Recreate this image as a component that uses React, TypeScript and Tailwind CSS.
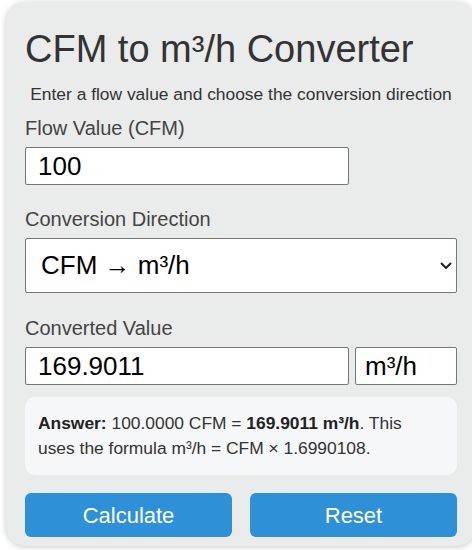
import { useState } from 'react';

const FACTOR = 1.6990108;

export default function App() {
  const [cfm, setCfm] = useState('100');
  const [dir, setDir] = useState('cfm');

  const n = parseFloat(cfm) || 0;
  const out = dir === 'cfm' ? n * FACTOR : n / FACTOR;
  const unit = dir === 'cfm' ? 'm³/h' : 'CFM';

  return (
    <div className="h-[550px] w-[472px] overflow-hidden bg-white font-['Liberation_Sans',Arial,sans-serif]">
      <div className="ml-[6px] mt-[2px] w-[470px] rounded-[20px] bg-[#eaebeb] px-[19px] pb-[9px] pt-[25px] shadow-[0_1px_6px_rgba(0,0,0,0.22)]">
        {/* Header */}
        <h1 className="text-[38px] leading-[44px] text-[#333]">CFM to m³/h Converter</h1>
        <p className="mt-[13px] text-center text-[17.4px] leading-[20px] text-[#333]">
          Enter a flow value and choose the conversion direction
        </p>

        {/* Flow value */}
        <label className="mt-[13px] block text-[20px] leading-[23px] text-[#444]">Flow Value (CFM)</label>
        <input
          value={cfm}
          onChange={(e) => setCfm(e.target.value)}
          className="mt-[7px] block h-[38px] w-[324px] rounded-[2px] border border-[#767676] bg-white px-[12px] text-[26px] text-black outline-none"
        />

        {/* Direction */}
        <label className="mt-[23px] block text-[20px] leading-[23px] text-[#444]">Conversion Direction</label>
        <div className="relative mt-[7px]">
          <select
            value={dir}
            onChange={(e) => setDir(e.target.value)}
            className="block h-[55px] w-full appearance-none rounded-[2px] border border-[#767676] bg-white px-[15px] text-[26px] text-black outline-none"
          >
            <option value="cfm">CFM → m³/h</option>
            <option value="m3h">m³/h → CFM</option>
          </select>
          <svg
            className="pointer-events-none absolute right-[5px] top-[24px]"
            width="12"
            height="7"
            viewBox="0 0 12 7"
            fill="none"
          >
            <path d="M1 1l5 5 5-5" stroke="#222" strokeWidth="2" />
          </svg>
        </div>

        {/* Result */}
        <label className="mt-[24px] block text-[20px] leading-[23px] text-[#444]">Converted Value</label>
        <div className="mt-[7px] flex gap-[6px]">
          <input
            readOnly
            value={out.toFixed(4)}
            className="block h-[38px] w-[324px] rounded-[2px] border border-[#767676] bg-white px-[12px] text-[26px] text-black outline-none"
          />
          <div className="flex h-[38px] flex-1 items-center rounded-[2px] border border-[#767676] bg-white px-[9px] text-[26px] text-black">
            {unit}
          </div>
        </div>

        <div className="mt-[12px] rounded-[10px] bg-[#f6f7f8] py-[14px] pl-[13px] pr-[20px] text-[17.4px] leading-[25px] text-[#333]">
          <b className="text-[#222]">Answer:</b> {n.toFixed(4)} CFM = <b className="text-[#222]">{out.toFixed(4)} {unit}</b>. This uses the formula m³/h = CFM × 1.6990108.
        </div>

        {/* Actions */}
        <div className="mt-[18px] grid grid-cols-2 gap-[18px]">
          <button className="h-[44px] rounded-[6px] bg-[#2e90d6] text-[22px] text-white">Calculate</button>
          <button
            onClick={() => { setCfm('100'); setDir('cfm'); }}
            className="h-[44px] rounded-[6px] bg-[#2e90d6] text-[22px] text-white"
          >
            Reset
          </button>
        </div>
      </div>
    </div>
  );
}
